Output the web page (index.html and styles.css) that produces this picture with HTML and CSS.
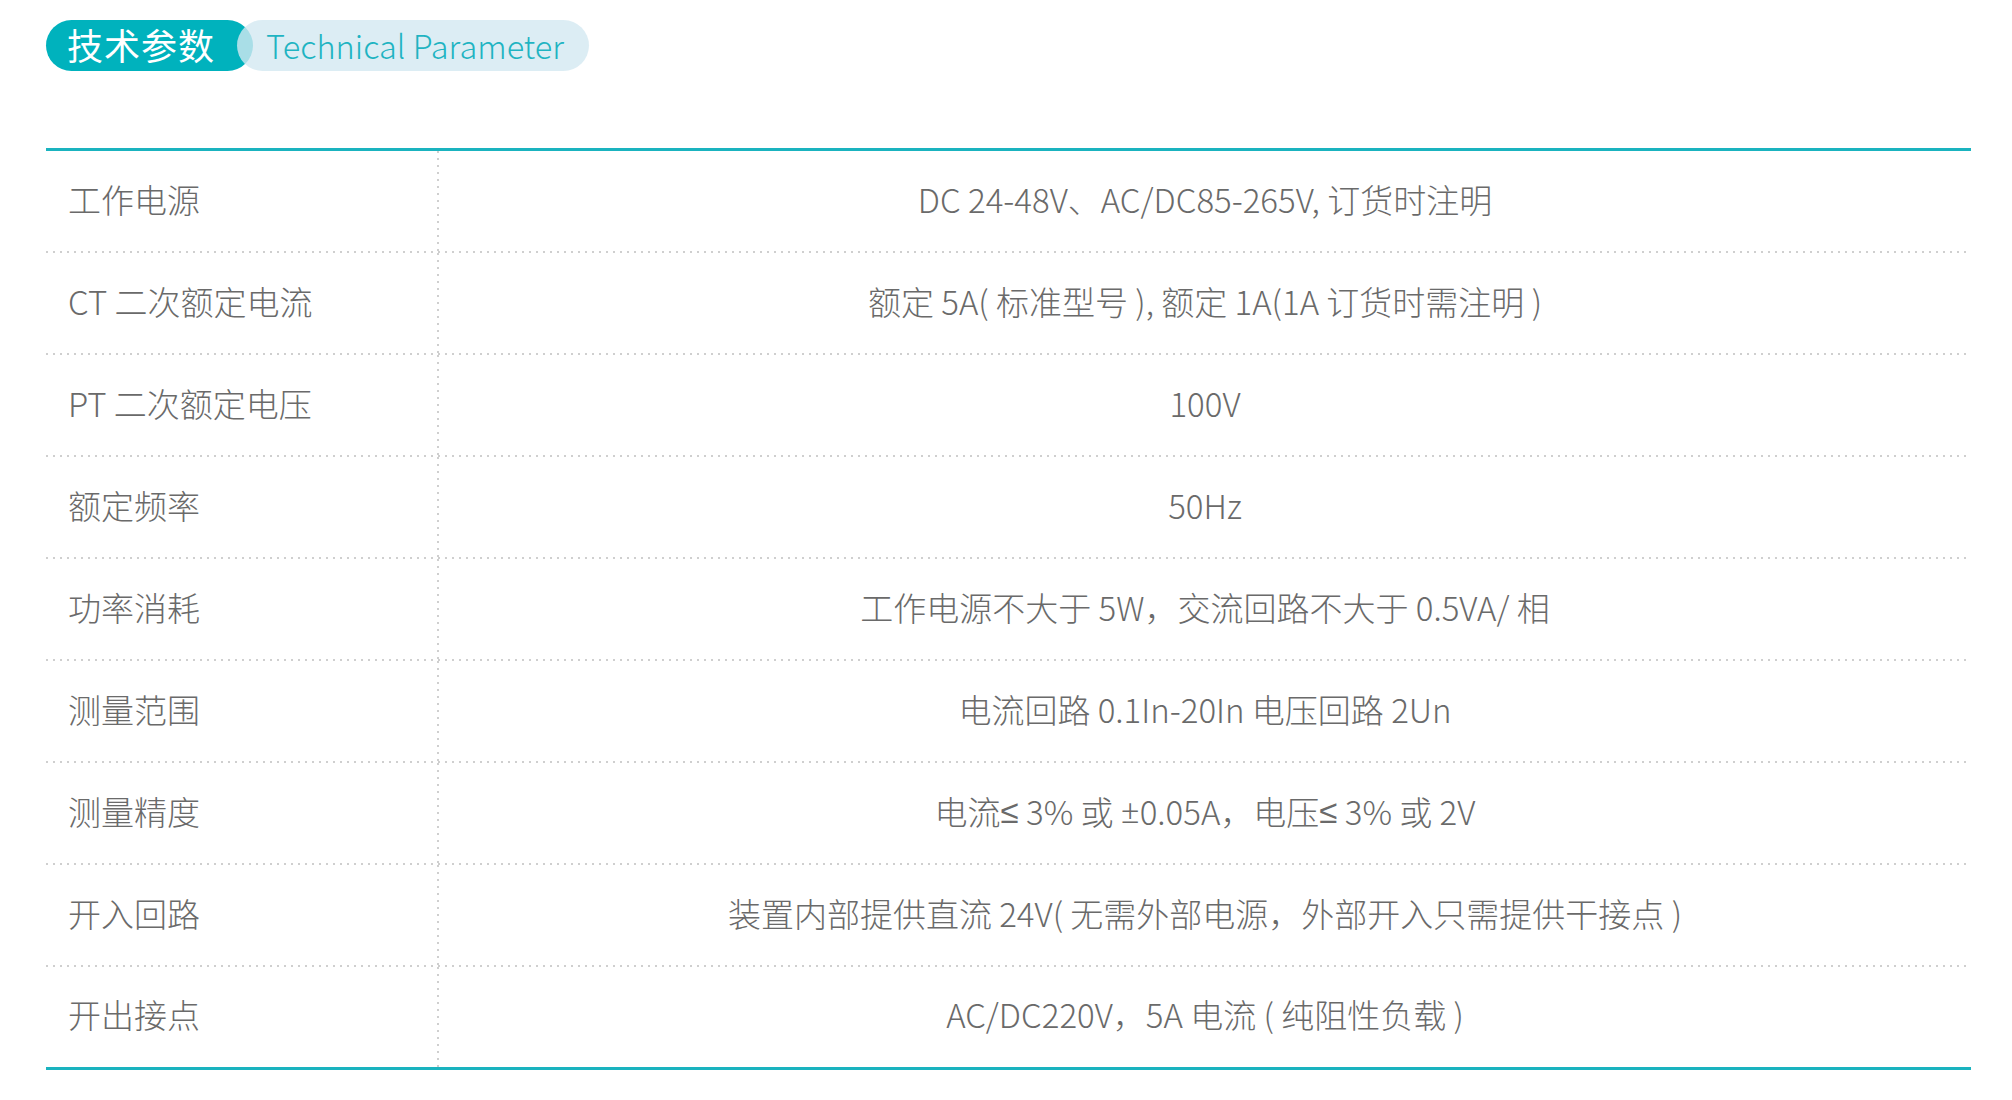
FILE: index.html
```html
<!DOCTYPE html>
<html lang="zh-CN">
<head>
<meta charset="utf-8">
<title>技术参数</title>
<link rel="stylesheet" href="styles.css">
</head>
<body>
<div class="page">
  <div class="heading">
    <div class="pill-main">技术参数</div>
    <div class="pill-sub">Technical Parameter</div>
  </div>
  <div class="spec-table">
    <div class="row"><div class="label">工作电源</div><div class="value">DC 24-48V、AC/DC85-265V, 订货时注明</div></div>
    <div class="row"><div class="label">CT 二次额定电流</div><div class="value">额定 5A( 标准型号 ), 额定 1A(1A 订货时需注明 )</div></div>
    <div class="row"><div class="label">PT 二次额定电压</div><div class="value">100V</div></div>
    <div class="row"><div class="label">额定频率</div><div class="value">50Hz</div></div>
    <div class="row"><div class="label">功率消耗</div><div class="value">工作电源不大于 5W，交流回路不大于 0.5VA/ 相</div></div>
    <div class="row"><div class="label">测量范围</div><div class="value">电流回路 0.1In-20In 电压回路 2Un</div></div>
    <div class="row"><div class="label">测量精度</div><div class="value">电流<span class="sym">≤</span> 3% 或 <span class="sym">±</span>0.05A，电压<span class="sym">≤</span> 3% 或 2V</div></div>
    <div class="row"><div class="label">开入回路</div><div class="value">装置内部提供直流 24V( 无需外部电源，外部开入只需提供干接点 )</div></div>
    <div class="row"><div class="label">开出接点</div><div class="value">AC/DC220V，5A 电流 ( 纯阻性负载 )</div></div>
  </div>
</div>
</body>
</html>
```
FILE: styles.css
```css
html, body {
  margin: 0;
  padding: 0;
  background: #ffffff;
}

body {
  font-family: "Noto Sans CJK SC", "Noto Sans", sans-serif;
  color: #6a6a6a;
}

.page {
  padding: 20px 41px 0 46px;
}

.heading {
  display: flex;
  align-items: center;
  height: 51px;
}

.pill-main {
  box-sizing: border-box;
  width: 207px;
  height: 51px;
  border-radius: 26px;
  background: #00b2bd;
  color: #ffffff;
  font-size: 36px;
  font-weight: 400;
  display: flex;
  align-items: center;
  padding-left: 21px;
  padding-bottom: 4px;
  letter-spacing: 1px;
}

.pill-sub {
  box-sizing: border-box;
  margin-left: -16px;
  width: 352px;
  height: 51px;
  border-radius: 26px;
  background: rgba(211, 232, 241, 0.8);
  color: #1fb4c2;
  font-size: 32.5px;
  font-weight: 300;
  display: flex;
  align-items: center;
  padding-left: 29px;
  padding-bottom: 3px;
  position: relative;
}

.spec-table {
  margin-top: 77px;
  border-top: 3px solid #1ab3bf;
  border-bottom: 3px solid #1ab3bf;
}

.row {
  display: grid;
  grid-template-columns: 393px 1fr;
  height: 102px;
  background-image: repeating-linear-gradient(to right, #cfcfcf 0 2px, transparent 2px 7px);
  background-size: 100% 2px;
  background-repeat: no-repeat;
  background-position: left bottom;
}

.row:last-child {
  height: 100px;
  background-image: none;
}

.label {
  display: flex;
  align-items: center;
  padding-left: 22px;
  padding-bottom: 7px;
  font-size: 33px;
  font-weight: 300;
  background-image: repeating-linear-gradient(to bottom, #cfcfcf 0 2px, transparent 2px 7px);
  background-size: 2px 100%;
  background-repeat: no-repeat;
  background-position: right top;
}

.value {
  display: flex;
  align-items: center;
  justify-content: center;
  padding-bottom: 7px;
  font-size: 33px;
  font-weight: 300;
  white-space: pre;
}

.sym {
  font-family: "Noto Sans", "DejaVu Sans", sans-serif;
  font-weight: 300;
}
```
